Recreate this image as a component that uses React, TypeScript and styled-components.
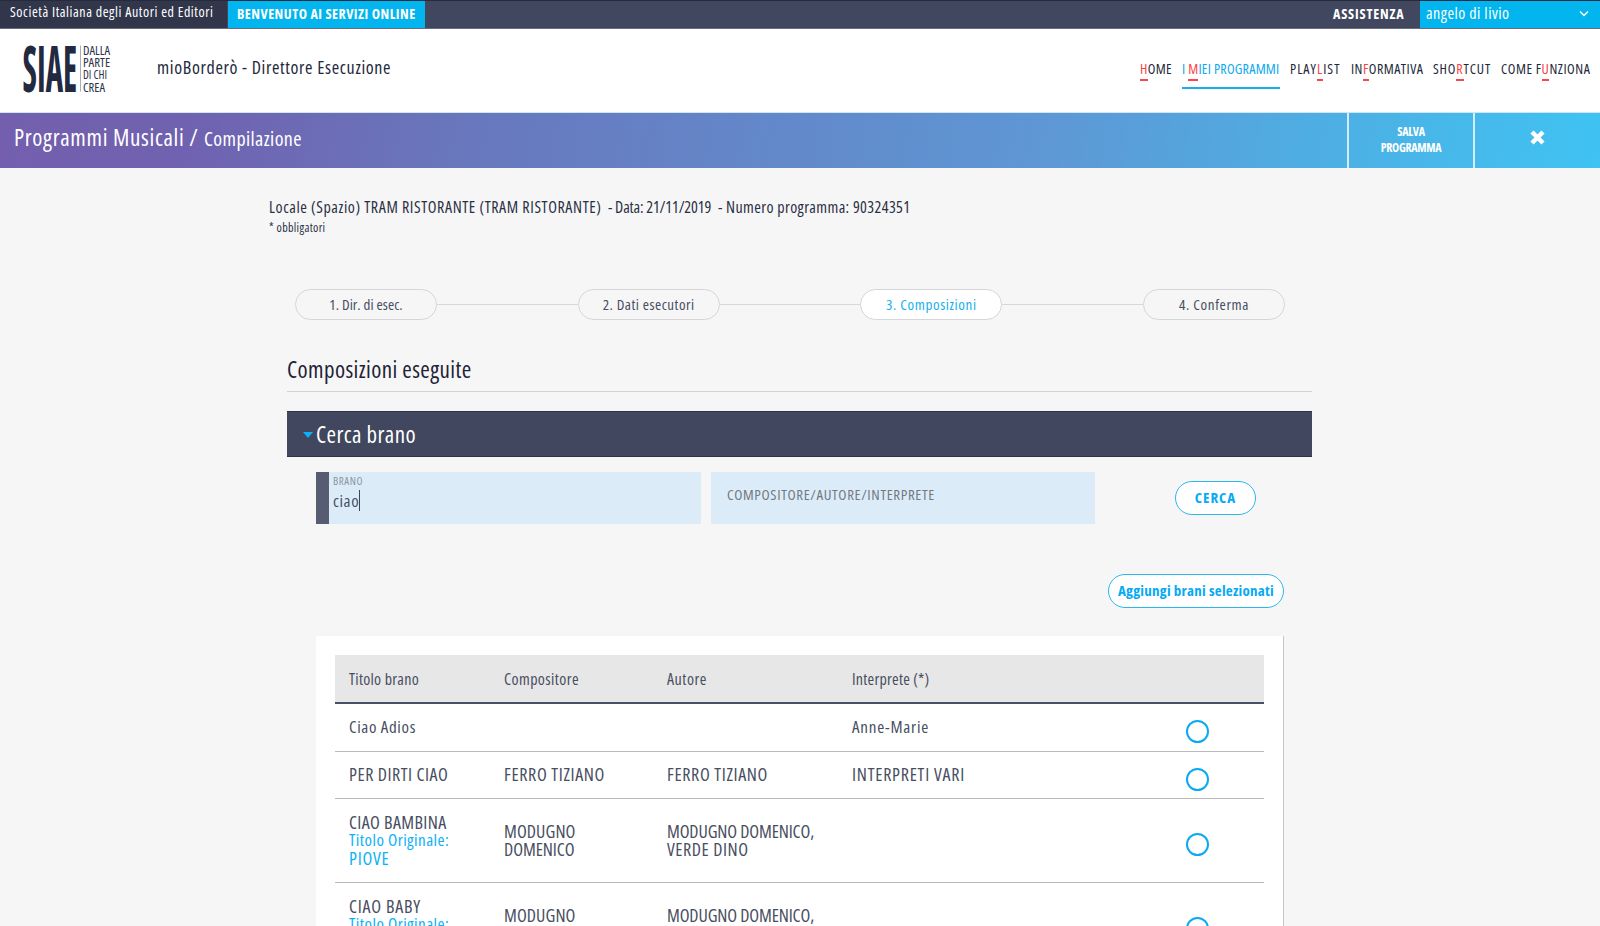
import React from 'react';
import styled, { createGlobalStyle, css } from 'styled-components';

const Global = createGlobalStyle`
  * { box-sizing: border-box; }
  html, body { margin: 0; height: 926px; overflow: hidden; background: #f6f6f6; }
  body, input, button {
    font-family: 'Open Sans', 'Liberation Sans', sans-serif;
    font-stretch: 75%;
  }
`;

const NAVY = '#40475e';
const CYAN = '#02b5ee';
const SKY = '#05a9f4';

type Track = { $track?: number };
const tracking = css<Track>`
  letter-spacing: ${(p) => p.$track ?? 0.5}px;
  white-space: nowrap;
`;

const Page = styled.div`
  width: 1600px;
  height: 926px;
  overflow: hidden;
  display: flex;
  flex-direction: column;
  background: #f6f6f6;
`;

/* Top bar */
const TopBar = styled.div`
  flex: none;
  height: 29px;
  display: flex;
  background: ${NAVY};
  border-top: 1px solid #262b3c;
  border-bottom: 1px solid #686d80;
  color: #fff;
`;
const Society = styled.div<Track>`
  ${tracking}
  width: 227px;
  padding-left: 10px;
  background: #31364b;
  font-size: 14px;
  font-weight: 500;
  line-height: 21px;
`;
const Welcome = styled.div<Track>`
  ${tracking}
  width: 197px;
  margin-left: 1px;
  padding-left: 9px;
  background: ${CYAN};
  font-size: 14px;
  font-weight: 700;
  line-height: 26px;
`;
const Support = styled.div<Track>`
  ${tracking}
  margin-left: auto;
  width: 87px;
  font-size: 14px;
  font-weight: 700;
  line-height: 26px;
`;
const UserMenu = styled.div<Track>`
  ${tracking}
  width: 180px;
  padding: 0 11px 0 6px;
  display: flex;
  justify-content: space-between;
  background: ${CYAN};
  font-size: 16px;
  line-height: 25px;
  svg { margin-top: 9px; }
`;

/* Header */
const Header = styled.header`
  flex: none;
  height: 84px;
  display: flex;
  background: #fff;
  border-bottom: 1px solid #cfe6f5;
`;
const Logo = styled.svg`
  flex: none;
  overflow: visible;
  margin: 14px 0 0 20px;
`;
const AppName = styled.div<Track>`
  ${tracking}
  margin-left: 42px;
  padding-top: 27px;
  font-size: 18px;
  line-height: 22px;
  color: #23283a;
`;
const Nav = styled.nav`
  margin-left: auto;
  padding: 28px 9px 0 0;
  display: flex;
  gap: 10px;
`;
const NavItem = styled.a<Track & { $w: number; $active?: boolean }>`
  ${tracking}
  width: ${(p) => p.$w}px;
  height: 32px;
  padding-top: 2px;
  font-size: 14px;
  font-weight: 500;
  line-height: 20px;
  color: ${(p) => (p.$active ? '#0ba9ee' : '#23283a')};
  border-bottom: ${(p) => (p.$active ? '2px solid #16aeea' : 'none')};
`;
const Key = styled.span`
  display: inline-block;
  height: 22px;
  color: #fb4145;
  border-bottom: 2px solid #f9484b;
`;

/* Page title bar */
const TitleBar = styled.div`
  flex: none;
  height: 55px;
  display: flex;
  color: #fff;
  background: linear-gradient(98deg, #735fad 0%, #7062b0 12%, #6976bc 28%, #5e97d4 65%, #4eaee3 82%, #3fc3f2 100%);
`;
const Crumbs = styled.div`
  flex: 1;
  padding: 9px 0 0 14px;
  display: flex;
  align-items: baseline;
  height: 42px;
  line-height: 30px;
`;
const Section = styled.span<Track>`
  ${tracking}
  width: 190px;
  font-size: 23px;
`;
const Current = styled.span<Track>`
  ${tracking}
  font-size: 20px;
`;
const BarButton = styled.button<{ $w: number }>`
  width: ${(p) => p.$w}px;
  padding: 0 0 2px;
  border: 0;
  border-left: 2px solid #d3edfa;
  background: none;
  color: #fff;
  font-size: 12px;
  font-weight: 700;
  line-height: 16px;
  letter-spacing: -0.3px;
`;

/* Event details */
const Info = styled.div`
  flex: none;
  height: 121px;
  padding: 28px 0 0 269px;
  color: #2a2f44;
`;
const InfoLine = styled.div`
  display: flex;
  height: 23px;
  font-size: 16px;
  line-height: 22px;
`;
const InfoPart = styled.span<Track & { $w: number }>`
  ${tracking}
  width: ${(p) => p.$w}px;
`;
const Required = styled.div<Track>`
  ${tracking}
  font-size: 12px;
  line-height: 18px;
`;

/* Wizard steps */
const Steps = styled.div`
  flex: none;
  width: 990px;
  margin-left: 295px;
  display: flex;
  align-items: center;
`;
const Step = styled.div<Track & { $active?: boolean }>`
  ${tracking}
  flex: none;
  width: 142px;
  height: 31px;
  border: 1px solid #d6d6d8;
  border-radius: 16px;
  text-align: center;
  font-size: 15px;
  line-height: 28px;
  color: ${(p) => (p.$active ? '#17b1ec' : '#484e61')};
  background: ${(p) => (p.$active ? '#fff' : 'transparent')};
`;
const Connector = styled.div`
  flex: 1;
  height: 1px;
  background: #d8d8da;
`;

/* Main column */
const Main = styled.main`
  flex: none;
  width: 1025px;
  margin: 37px 0 0 287px;
`;
const Heading = styled.h2<Track>`
  ${tracking}
  margin: 0 0 19px;
  height: 35px;
  border-bottom: 1px solid #d3d3d5;
  font-size: 23px;
  font-weight: 500;
  line-height: 25px;
  color: #1e2337;
`;
const PanelTitle = styled.div<Track>`
  ${tracking}
  height: 46px;
  padding-left: 16px;
  display: flex;
  align-items: center;
  gap: 3px;
  background: ${NAVY};
  border: 1px solid #2c3247;
  border-width: 1px 0;
  color: #fff;
  font-size: 23px;
  line-height: 40px;
  padding-bottom: 1px;
`;
const Caret = styled.span`
  width: 10px;
  margin-top: 3px;
  border: 5px solid transparent;
  border-top: 6px solid #07b4fb;
  border-bottom: 0;
`;
const SearchRow = styled.div`
  display: flex;
  padding: 15px 0 0 29px;
  height: 117px;
`;
const Field = styled.div<{ $first?: boolean }>`
  width: 385px;
  height: 52px;
  background: #dbecf8;
  border-left: ${(p) => (p.$first ? '13px solid #565c71' : 'none')};
  padding-left: ${(p) => (p.$first ? 4 : 16)}px;
  & + & { margin-left: 10px; width: 384px; }
`;
const FieldLabel = styled.div<Track>`
  ${tracking}
  padding-top: 1px;
  font-size: 11px;
  line-height: 15px;
  color: #8d939f;
`;
const FieldValue = styled.div<Track>`
  ${tracking}
  display: flex;
  margin-top: 2px;
  font-size: 17px;
  line-height: 21px;
  color: #4a5065;
  &::after { content: ''; width: 1px; height: 21px; background: #3f455c; }
`;
const Placeholder = styled.div<Track>`
  ${tracking}
  font-size: 15px;
  line-height: 45px;
  color: #737882;
`;
const PillButton = styled.button<Track & { $w: number }>`
  ${tracking}
  width: ${(p) => p.$w}px;
  height: 34px;
  padding: 0 0 2px;
  border: 1px solid #2cb6ee;
  border-radius: 17px;
  background: #fff;
  color: ${SKY};
  font-size: 15px;
  font-weight: 700;
`;
const SearchAction = styled.div`
  padding: 9px 0 0 80px;
`;
const AddRow = styled.div`
  display: flex;
  justify-content: flex-end;
  height: 62px;
  padding-right: 28px;
`;

/* Results */
const Card = styled.div`
  width: 968px;
  height: 320px;
  margin-left: 29px;
  padding: 19px 19px 0;
  background: #fff;
  border-right: 1px solid #c6c7cb;
`;
const columns = css`
  display: grid;
  grid-template-columns: 155px 163px 185px 335px 1fr;
  padding-left: 14px;
  color: #484e61;
`;
const HeadRow = styled.div`
  ${columns}
  height: 49px;
  background: #e7e7e7;
  border-bottom: 2px solid #4a5066;
  font-size: 16px;
  font-weight: 500;
  line-height: 49px;
`;
const Row = styled.div<{ $h: number }>`
  ${columns}
  align-items: center;
  height: ${(p) => p.$h}px;
  padding-bottom: 2px;
  border-bottom: 1px solid #b9b9bf;
  font-size: 18px;
  line-height: 18px;
`;
const Line = styled.div<Track & { $link?: boolean; $small?: boolean }>`
  ${tracking}
  font-size: ${(p) => (p.$small ? '17px' : 'inherit')};
  color: ${(p) => (p.$link ? '#0db1f6' : 'inherit')};
`;
const Pick = styled.span`
  width: 23px;
  height: 23px;
  margin: 10px 0 0 -1px;
  border: 2px solid #0ba9f3;
  border-radius: 50%;
`;

type Piece = { t: string; k: number; link?: boolean; small?: boolean };
const modugno: Piece[] = [{ t: 'MODUGNO', k: 0.1 }, { t: 'DOMENICO', k: -0.05 }];
const modugnoVerde: Piece[] = [{ t: 'MODUGNO DOMENICO,', k: -0.12 }, { t: 'VERDE DINO', k: 0.55 }];
const original: Piece[] = [
  { t: 'Titolo Originale:', k: 0.44, link: true, small: true },
  { t: 'PIOVE', k: 0.76, link: true },
];
const rows: { h: number; cells: Piece[][] }[] = [
  { h: 48, cells: [[{ t: 'Ciao Adios', k: 0.63, small: true }], [], [], [{ t: 'Anne-Marie', k: 0.78, small: true }]] },
  {
    h: 47,
    cells: [
      [{ t: 'PER DIRTI CIAO', k: 0.54 }],
      [{ t: 'FERRO TIZIANO', k: 0.64 }],
      [{ t: 'FERRO TIZIANO', k: 0.64 }],
      [{ t: 'INTERPRETI VARI', k: 0.76 }],
    ],
  },
  { h: 84, cells: [[{ t: 'CIAO BAMBINA', k: 0.38 }, ...original], modugno, modugnoVerde, []] },
  { h: 84, cells: [[{ t: 'CIAO BABY', k: 0.78 }, ...original], modugno, modugnoVerde, []] },
];

const SiaeLogo = () => (
  <Logo width="95" height="54" viewBox="20 43 95 54" fill="#23293f">
    <text x="22.5" y="91.7" fontSize="64.5" fontWeight="700" textLength="54.5" lengthAdjust="spacingAndGlyphs">SIAE</text>
    <rect x="80" y="45.5" width="1" height="46" fill="#a9adb8" />
    <g fontSize="13" fontWeight="500" fill="#2d3348">
      <text x="83" y="55" textLength="27" lengthAdjust="spacingAndGlyphs">DALLA</text>
      <text x="83" y="67" textLength="27" lengthAdjust="spacingAndGlyphs">PARTE</text>
      <text x="83" y="79" textLength="24" lengthAdjust="spacingAndGlyphs">DI CHI</text>
      <text x="83" y="91.5" textLength="22" lengthAdjust="spacingAndGlyphs">CREA</text>
    </g>
  </Logo>
);

export default function App() {
  return (
    <Page>
      <Global />
      <TopBar>
        <Society $track={0.58}>Società Italiana degli Autori ed Editori</Society>
        <Welcome $track={0.48}>BENVENUTO AI SERVIZI ONLINE</Welcome>
        <Support $track={0.8}>ASSISTENZA</Support>
        <UserMenu $track={0.49}>
          angelo di livio
          <svg width="10" height="8" viewBox="0 0 10 8" fill="none" stroke="#fff" strokeWidth="1.5">
            <path d="M1 1.5 5 5.5 9 1.5" />
          </svg>
        </UserMenu>
      </TopBar>

      <Header>
        <SiaeLogo />
        <AppName $track={0.65}>mioBorderò - Direttore Esecuzione</AppName>
        <Nav>
          <NavItem $w={32} $track={0.36}><Key>H</Key>OME</NavItem>
          <NavItem $w={98} $track={0.25} $active>I <Key>M</Key>IEI PROGRAMMI</NavItem>
          <NavItem $w={51} $track={1.04}>PLAY<Key>L</Key>IST</NavItem>
          <NavItem $w={72} $track={0.49}>IN<Key>F</Key>ORMATIVA</NavItem>
          <NavItem $w={58} $track={0.86}>SHO<Key>R</Key>TCUT</NavItem>
          <NavItem $w={90} $track={0.56}>COME F<Key>U</Key>NZIONA</NavItem>
        </Nav>
      </Header>

      <TitleBar>
        <Crumbs>
          <Section $track={0.67}>Programmi Musicali /</Section>
          <Current $track={0.42}>Compilazione</Current>
        </Crumbs>
        <BarButton $w={126}>SALVA<br />PROGRAMMA</BarButton>
        <BarButton $w={127} aria-label="Chiudi">
          <svg width="15" height="15" viewBox="0 0 15 15" stroke="#fff" strokeWidth="4.4">
            <path d="M2 2 13 13M13 2 2 13" />
          </svg>
        </BarButton>
      </TitleBar>

      <Info>
        <InfoLine>
          <InfoPart $w={339} $track={0.6}>Locale (Spazio) TRAM RISTORANTE (TRAM RISTORANTE)</InfoPart>
          <InfoPart $w={110} $track={-0.13}>- Data: 21/11/2019</InfoPart>
          <InfoPart $w={194} $track={0.39}>- Numero programma: 90324351</InfoPart>
        </InfoLine>
        <Required $track={0.33}>* obbligatori</Required>
      </Info>

      <Steps>
        <Step $track={0.06}>1. Dir. di esec.</Step>
        <Connector />
        <Step $track={0.51}>2. Dati esecutori</Step>
        <Connector />
        <Step $track={0.6} $active>3. Composizioni</Step>
        <Connector />
        <Step $track={0.62}>4. Conferma</Step>
      </Steps>

      <Main>
        <Heading $track={0.4}>Composizioni eseguite</Heading>
        <PanelTitle $track={0.4}><Caret />Cerca brano</PanelTitle>
        <SearchRow>
          <Field $first>
            <FieldLabel $track={0.55}>BRANO</FieldLabel>
            <FieldValue $track={0.6}>ciao</FieldValue>
          </Field>
          <Field>
            <Placeholder $track={0.63}>COMPOSITORE/AUTORE/INTERPRETE</Placeholder>
          </Field>
          <SearchAction>
            <PillButton $w={81} $track={1.01}>CERCA</PillButton>
          </SearchAction>
        </SearchRow>
        <AddRow>
          <PillButton $w={176} $track={0.26}>Aggiungi brani selezionati</PillButton>
        </AddRow>
        <Card>
          <HeadRow>
            <Line $track={0.28}>Titolo brano</Line>
            <Line $track={0.41}>Compositore</Line>
            <Line $track={0.53}>Autore</Line>
            <Line $track={0.24}>Interprete (*)</Line>
          </HeadRow>
          {rows.map((r, i) => (
            <Row key={i} $h={r.h}>
              {r.cells.map((c, j) => (
                <div key={j}>
                  {c.map((p) => (
                    <Line key={p.t} $track={p.k} $link={p.link} $small={p.small}>{p.t}</Line>
                  ))}
                </div>
              ))}
              <Pick />
            </Row>
          ))}
        </Card>
      </Main>
    </Page>
  );
}
